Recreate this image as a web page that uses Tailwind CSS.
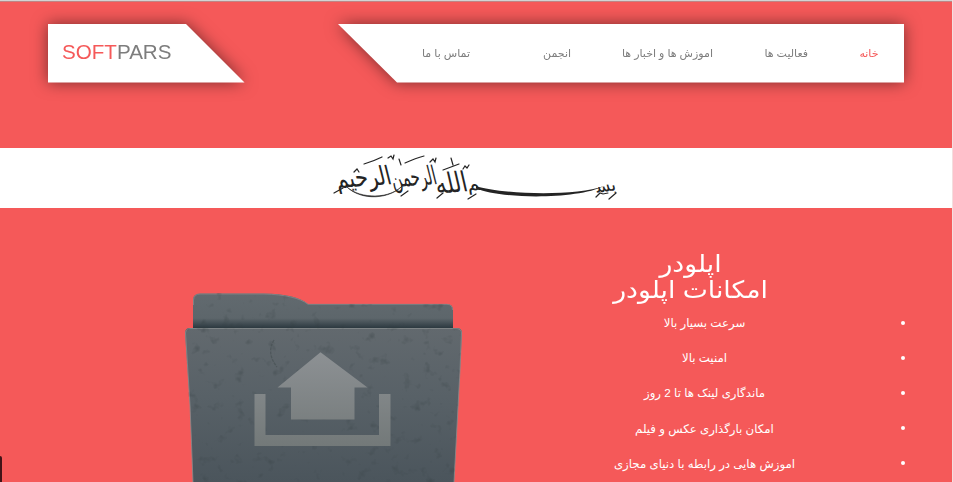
<!DOCTYPE html>
<html lang="fa">
<head>
<meta charset="utf-8">
<title>SOFTPARS</title>
<script src="https://cdn.jsdelivr.net/npm/@tailwindcss/browser@4"></script>
</head>
<body class="h-[482px] w-[953px] overflow-hidden bg-[#f55959] font-['Liberation_Sans','DejaVu_Sans',sans-serif]">
<div class="relative flex h-[482px] flex-col overflow-hidden border-r border-[#f4dede]">
  <div class="h-[2px] shrink-0 border-b border-[#c08484] bg-[#d3d3d3]"></div>

  <header class="flex h-[145.5px] shrink-0 items-start justify-between pt-[22px] pr-[48px] pl-[47.5px]">
    <div class="drop-shadow-[0_0_8px_rgba(0,0,0,0.5)]">
      <a class="flex h-[58.5px] w-[197px] items-center bg-white pb-px pl-[14.5px] text-[20.6px] text-[#7d7d7d] [clip-path:polygon(0_0,138.5px_0,100%_100%,0_100%)]"><span class="text-[#f55959]">SOFT</span>PARS</a>
    </div>
    <div class="drop-shadow-[0_0_8px_rgba(0,0,0,0.5)]">
      <nav dir="rtl" class="flex h-[58.5px] w-[566px] items-center bg-white pr-[25.5px] text-[11px] whitespace-nowrap text-[#7d7d7d] [clip-path:polygon(0_0,100%_0,100%_100%,59px_100%)]">
        <a class="w-[70.5px] shrink-0 text-[#f55959]">خانه</a>
        <a class="w-[95px] shrink-0">فعالیت ها</a>
        <a class="w-[142px] shrink-0">اموزش ها و اخبار ها</a>
        <a class="w-[101px] shrink-0">انجمن</a>
        <a class="shrink-0">تماس با ما</a>
      </nav>
    </div>
  </header>

  <section class="flex h-[60.5px] shrink-0 justify-center bg-white">
    <svg class="h-[59px] w-[300px] font-['DejaVu_Sans',sans-serif]" viewBox="326 148 300 59" fill="#242424" role="img" aria-label="بسم الله الرحمن الرحيم">
      <g direction="rtl">
        <text transform="translate(617 190) rotate(-8) skewX(8)" font-size="18" textLength="20" lengthAdjust="spacingAndGlyphs">بس&#x200D;</text>
        <text transform="translate(481 190) skewX(8)" font-size="20" textLength="13" lengthAdjust="spacingAndGlyphs">&#x200D;م</text>
        <text transform="translate(469 191) rotate(-5) skewX(8)" font-size="28" textLength="32" lengthAdjust="spacingAndGlyphs">الله</text>
        <text transform="translate(438 184) rotate(-4) skewX(10)" font-size="26" textLength="45" lengthAdjust="spacingAndGlyphs">الرحمن</text>
        <text transform="translate(393 184) rotate(-4) skewX(10)" font-size="26" textLength="56" lengthAdjust="spacingAndGlyphs">الرحيم</text>
      </g>
      <path d="M476 186C498 194 575 197 604 186C577 200 497 199 476 188Z"/>
      <path d="M347 187C360 199 391 200 404 184C391 200 361 201 347 187Z" stroke="#242424" stroke-width=".6"/>
      <g fill="none" stroke="#242424" stroke-width="1.2" stroke-linecap="round">
        <path d="M364 164Q374 161 382 157M405 163Q416 158 424 156M443 170Q451 167 459 164M334 193L343 188M401 196L408 191M437 198L443 193M468 199L476 194M596 197L600 193L603 194L608 193M609 199L616 193M388 158L391 156L393 159L394 155M399 159L401 165M430 162L433 159L435 162L436 158M451 158L453 165M463 169L465 166L467 168L469 165M354 172L357 169L359 172"/>
      </g>
    </svg>
  </section>

  <main class="flex min-h-0 flex-1">
    <div class="w-[553px] shrink-0 pt-[72px] pl-[170px]">
      <svg class="h-[202px] w-[310px]" viewBox="170 280 310 202">
        <defs>
          <linearGradient id="back" x1="0" y1="293" x2="0" y2="328" gradientUnits="userSpaceOnUse"><stop offset="0" stop-color="#626a6f"/><stop offset=".72" stop-color="#5d666b"/><stop offset="1" stop-color="#2c3940"/></linearGradient>
          <linearGradient id="front" x1="0" y1="328" x2="0" y2="482" gradientUnits="userSpaceOnUse"><stop offset="0" stop-color="#62696e"/><stop offset=".45" stop-color="#586167"/><stop offset="1" stop-color="#4b555c"/></linearGradient>
          <linearGradient id="sign" x1="0" y1="352" x2="0" y2="446" gradientUnits="userSpaceOnUse"><stop offset="0" stop-color="#8d9194"/><stop offset="1" stop-color="#737979"/></linearGradient>
          <filter id="grain" x="0" y="0" width="100%" height="100%" color-interpolation-filters="sRGB">
            <feTurbulence type="fractalNoise" baseFrequency=".09" numOctaves="3" seed="8"/>
            <feColorMatrix values="0 0 0 0 .2  0 0 0 0 .24  0 0 0 0 .25  3 0 0 0 -1.85"/>
            <feComposite operator="in" in2="SourceGraphic"/>
          </filter>
        </defs>
        <path d="M193 328V300Q193 293.500 200 293.500H264C285 294 300 297 308 304H447Q453 304 453 310V328Z" fill="url(#back)"/>
        <path d="M193.500 305V300Q194 294 200 294H264C285 294.500 300 298 308 304.300H447Q452.500 304.500 452.500 310" fill="none" stroke="#8b8c8e" stroke-width=".7"/>
        <path d="M185 333Q185 328 190 328H457Q462 328 462 333L460 370L454 482H193L190 405Z" fill="url(#front)"/>
        <path d="M193 482L190 405L185.500 333Q186 328.500 190 328.500H457Q461.500 329 461.500 333L460 370L454 482" fill="none" stroke="#858b8d" stroke-width=".8"/>
        <path d="M193 328V300Q193 293 200 293H264C285 294 300 297 308 304H447Q453 304 453 310V328H457Q462 328 462 333L454 482H193L185 333Q185 328 190 328Z" fill="#000" filter="url(#grain)" opacity=".38"/>
        <path d="M320.500 352.300L367.500 387.500H354.500V419.500H291V387.500H277.500ZM254.500 394H265.500V435H379V394H390.500V446H254.500Z" fill="url(#sign)"/>
        <path d="M274 340Q266 353 277 367" fill="none" stroke="#40494c" stroke-width="1.300" stroke-dasharray="3 1" opacity=".5"/>
      </svg>
    </div>
    <div dir="rtl" class="w-[399px] shrink-0 pt-[43px] text-white">
      <h1 class="mr-[121px] w-[281px] scale-x-[1.11] text-center text-[24px] leading-[26px] font-normal">اپلودر<br>امکانات اپلودر</h1>
      <ul class="mt-[2px] text-[11.75px] leading-[35.2px]">
        <li class="flex items-center"><span class="mr-[47px] size-[4px] rounded-full bg-white"></span><span class="mr-[56px] w-[281px] text-center">سرعت بسیار بالا</span></li>
        <li class="flex items-center"><span class="mr-[47px] size-[4px] rounded-full bg-white"></span><span class="mr-[56px] w-[281px] text-center">امنیت بالا</span></li>
        <li class="flex items-center"><span class="mr-[47px] size-[4px] rounded-full bg-white"></span><span class="mr-[56px] w-[281px] text-center">ماندگاری لینک ها تا 2 روز</span></li>
        <li class="flex items-center"><span class="mr-[47px] size-[4px] rounded-full bg-white"></span><span class="mr-[56px] w-[281px] text-center">امکان بارگذاری عکس و فیلم</span></li>
        <li class="flex items-center"><span class="mr-[47px] size-[4px] rounded-full bg-white"></span><span class="mr-[56px] w-[281px] text-center">اموزش هایی در رابطه با دنیای مجازی</span></li>
      </ul>
    </div>
  </main>
  <div class="absolute bottom-0 left-0 h-[26px] w-[2px] rounded-tr bg-[#421418]"></div>
</div>
</body>
</html>
